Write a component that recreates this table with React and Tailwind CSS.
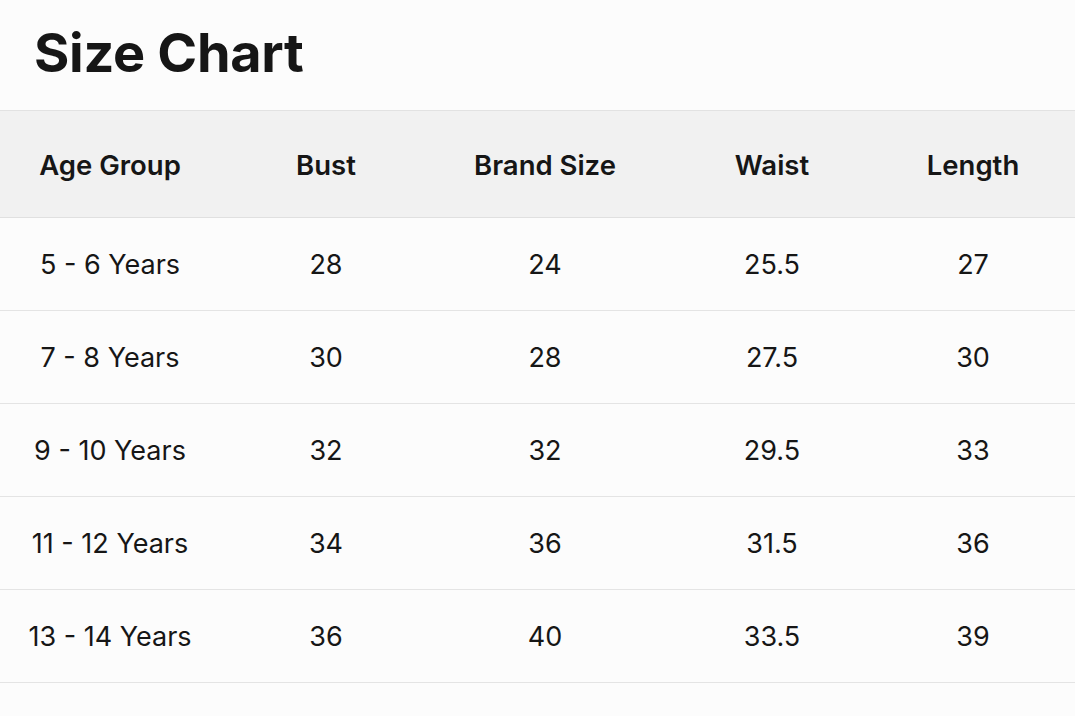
const headers = ["Age Group", "Bust", "Brand Size", "Waist", "Length"];

const rows = [
  ["5 - 6 Years", "28", "24", "25.5", "27"],
  ["7 - 8 Years", "30", "28", "27.5", "30"],
  ["9 - 10 Years", "32", "32", "29.5", "33"],
  ["11 - 12 Years", "34", "36", "31.5", "36"],
  ["13 - 14 Years", "36", "40", "33.5", "39"],
];

const cols = "grid grid-cols-[220px_212px_226px_228px_174px]";

const App = () => {
  return (
    <div className="w-[1075px] h-[716px] bg-[#fcfcfc] text-[#161616] font-['Inter',sans-serif] overflow-hidden">
      <h1 className="px-[34px] pt-[18px] h-[110px] text-[54px] font-bold tracking-[-0.3px] leading-[70px]">
        Size Chart
      </h1>

      <div className="border-t border-[#e2e2e2]">
        <div className={`${cols} h-[107px] pt-[4px] items-center bg-[#f1f1f1] border-b border-[#e0e0e0]`}>
          {headers.map((h) => (
            <div key={h} className="text-center text-[27.5px] font-semibold">
              {h}
            </div>
          ))}
        </div>

        {rows.map((r, i) => (
          <div
            key={i}
            className={`${cols} h-[93px] pt-[3px] items-center border-b border-[#e4e4e4]`}
          >
            {r.map((c, j) => (
              <div key={j} className="text-center text-[27px]">
                {c}
              </div>
            ))}
          </div>
        ))}
      </div>
    </div>
  );
};

export default App;
